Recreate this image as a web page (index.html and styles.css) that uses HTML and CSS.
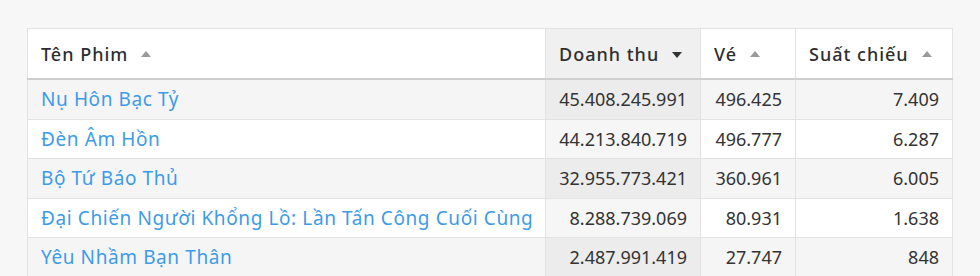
FILE: index.html
```html
<!DOCTYPE html>
<html lang="vi">
<head>
<meta charset="utf-8">
<title>Phim</title>
<link rel="stylesheet" href="styles.css">
</head>
<body>
<div class="wrap">
<table class="grid">
  <colgroup>
    <col class="c-name"><col class="c-rev"><col class="c-tix"><col class="c-show">
  </colgroup>
  <thead>
    <tr>
      <th class="left">Tên Phim<span class="sort up"></span></th>
      <th class="sorted">Doanh thu<span class="sort down"></span></th>
      <th>Vé<span class="sort up"></span></th>
      <th>Suất chiếu<span class="sort up"></span></th>
    </tr>
  </thead>
  <tbody>
    <tr><td><a href="#">Nụ Hôn Bạc Tỷ</a></td><td class="num sorted">45.408.245.991</td><td class="num">496.425</td><td class="num">7.409</td></tr>
    <tr><td><a href="#">Đèn Âm Hồn</a></td><td class="num sorted">44.213.840.719</td><td class="num">496.777</td><td class="num">6.287</td></tr>
    <tr><td><a href="#">Bộ Tứ Báo Thủ</a></td><td class="num sorted">32.955.773.421</td><td class="num">360.961</td><td class="num">6.005</td></tr>
    <tr><td><a href="#">Đại Chiến Người Khổng Lồ: Lần Tấn Công Cuối Cùng</a></td><td class="num sorted">8.288.739.069</td><td class="num">80.931</td><td class="num">1.638</td></tr>
    <tr><td><a href="#">Yêu Nhầm Bạn Thân</a></td><td class="num sorted">2.487.991.419</td><td class="num">27.747</td><td class="num">848</td></tr>
  </tbody>
</table>
</div>
</body>
</html>
```
FILE: styles.css
```css
html, body {
  margin: 0;
  background: #f7f7f7;
}
body {
  font-family: "Noto Sans", "Open Sans", sans-serif;
  color: #333;
}
.wrap {
  padding: 28px 29px 0 27px;
}
.grid {
  border-collapse: collapse;
  width: 925px;
  background: #fff;
  border: 1px solid #d4d4d4;
  table-layout: fixed;
}
.c-name { width: 518px; }
.c-rev { width: 155px; }
.c-tix { width: 95px; }
.c-show { width: 157px; }
th, td {
  border: 1px solid #e2e2e2;
  padding: 8px 13px;
  font-size: 18px;
  line-height: 22.5px;
  white-space: nowrap;
}
th {
  text-align: left;
  font-weight: 500;
  font-size: 18px;
  letter-spacing: 1px;
  height: 32px;
  padding-top: 9px;
  padding-bottom: 8px;
  border-bottom: 2px solid #cfcfcf;
  color: #2e2e2e;
}
th.sorted { background: #f0f0f0; }
td.num { text-align: right; color: #333; }
tbody tr:nth-child(odd) td { background: #f5f5f5; }
tbody tr:nth-child(odd) td.sorted { background: #ececec; }
tbody tr:nth-child(even) td.sorted { background: #f6f6f6; }
td a {
  color: #3d9be8;
  text-decoration: none;
  font-size: 19px;
  letter-spacing: 0.6px;
}
.sort {
  display: inline-block;
  width: 0;
  height: 0;
  margin-left: 13px;
  vertical-align: middle;
  border-left: 5px solid transparent;
  border-right: 5px solid transparent;
}
.sort.up {
  border-bottom: 6px solid #9a9a9a;
  margin-top: -3px;
}
.sort.down {
  border-top: 6px solid #333;
  margin-top: -1px;
}
```
